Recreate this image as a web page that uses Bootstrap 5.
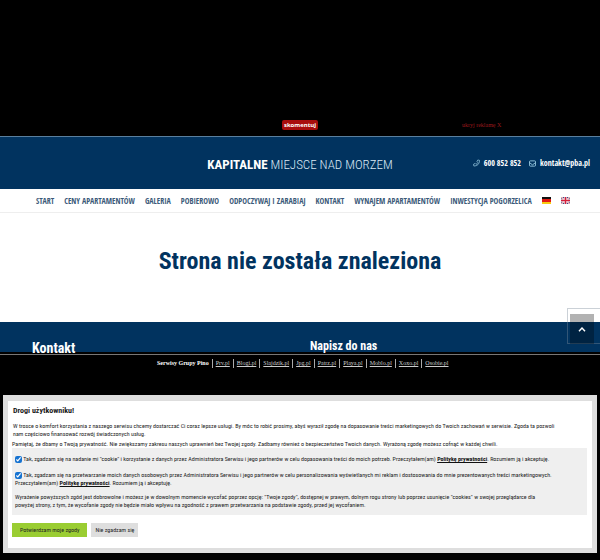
<!DOCTYPE html>
<html lang="pl">
<head>
<meta charset="utf-8">
<meta name="viewport" content="width=device-width, initial-scale=1">
<title>Strona nie została znaleziona</title>
<link href="https://cdn.jsdelivr.net/npm/bootstrap@5.3.0/dist/css/bootstrap.min.css" rel="stylesheet">
<style>
:root { --navy: #01335f; --narrow: "Roboto Condensed", Roboto, sans-serif; --narrow-open: "Open Sans Condensed", "Open Sans", sans-serif; }
body { background: #000; }
.ad-bar { height: 137px; border-bottom: 1px solid #5a7f9e; padding-bottom: 6px; }
.comment-btn { background: #a80d0d; color: #fff; border: 0; border-radius: 2px; font: bold 6px/10px "Open Sans", sans-serif; padding: 0 2px; }
.hide-ad { color: #9c181c; font: 6px/10px "Liberation Serif", serif; padding-left: 12px; }
.site-head { background: var(--navy); color: #fff; height: 52px; }
.brand-link { color: #dbe9f5; font: 300 13px/16px var(--narrow); }
.brand-link b { font-weight: 700; }
.site-contact { padding-right: 10px; }
.contact-link { color: #fff; font: bold 8px/10px var(--narrow-open); }
.main-menu { height: 24px; border-bottom: 1px solid #eee; gap: 10px; padding-left: 36px; font: 300 8px/10px var(--narrow-open); }
.main-menu a { color: #3b5a79; }
.page-title { color: var(--navy); font: bold 24px/30px var(--narrow); height: 109px; padding-top: 33px; }
.foot { background: var(--navy); color: #fff; height: 30px; padding: 17px 32px 0; }
.foot h2 { font: bold 14px/18px var(--narrow); }
.foot h2.form-title { font-size: 12px; line-height: 15px; padding-left: 10px; }
.up-box { right: 0; top: -14px; width: 33px; height: 36px; padding: 5px 6px 1px 2px; border: 1px solid #7c8c9a66; border-right: 0; }
.up-btn { background: #0000004d; width: 24px; height: 30px; border: 0; }
.services { border-top: 1px solid #777; margin-top: 2px; padding: 4px 0 0 157px; font: 6px/9px "Liberation Serif", serif; height: 41px; }
.services a { color: #ccc; border-left: 1px solid #aaa; padding-left: 3px; margin-left: 3px; }
.consent { background: #fff; border: 5px solid #dedede; border-top-width: 6px; margin: 0 3px 7px; padding: 5px 5px 11px 4px; font: 6px/8px var(--narrow); color: #222; }
.consent h1 { font: bold 8px/10px var(--narrow); margin-bottom: 6px; padding-left: 1px; }
.consent .lead-in { margin-bottom: 2px; padding-left: 1px; }
.consent a { color: #111; font-weight: bold; }
.consent-box { background: #efefef; padding: 7px 3px 6px; }
.consent-box p { margin-bottom: 8px; }
.consent-box p.terms { margin-bottom: 6px; }
.consent input { width: 7px; height: 7px; margin: 0; vertical-align: bottom; accent-color: #1673d1; }
.consent button { border: 0; background: #dedede; color: #222; height: 14px; padding: 0 4px; }
.consent button.agree { background: #9acd32; padding: 0 8px; }
</style>
<script src="https://cdn.jsdelivr.net/npm/bootstrap@5.3.0/dist/js/bootstrap.bundle.min.js"></script>
</head>
<body class="overflow-hidden">
<div class="ad-bar row g-0 align-items-end">
  <div class="col-6 offset-3 d-flex justify-content-center"><button type="button" class="comment-btn">skomentuj</button></div>
  <div class="col-3 d-flex"><a href="#" class="hide-ad text-decoration-none">ukryj reklamę X</a></div>
</div>
<header class="site-head row g-0 align-items-center text-nowrap">
  <div class="col-6 offset-3 text-center"><a href="#" class="brand-link text-decoration-none"><b class="text-white">KAPITALNE</b> MIEJSCE NAD MORZEM</a></div>
  <div class="site-contact col-3 d-flex justify-content-end gap-2">
    <a href="#" class="contact-link d-flex align-items-center gap-1 text-decoration-none"><svg width="7" height="8" viewBox="0 0 16 16" fill="none" stroke="#9fd0e6" stroke-width="1.6"><path d="M11 1l4 1c0 8-5 13-13 13l-1-4 4-2 2 2c2-1 3-2 4-4L9 5z"/></svg>600 852 852</a>
    <a href="#" class="contact-link d-flex align-items-center gap-1 text-decoration-none"><svg width="7" height="7" viewBox="0 0 16 14" fill="none" stroke="#9fd0e6" stroke-width="2"><rect x="1" y="1" width="14" height="12" rx="2"/><path d="M1 5l7 5 7-5"/></svg>kontakt@pba.pl</a>
  </div>
</header>
<nav class="main-menu bg-white d-flex align-items-center text-nowrap">
  <a href="#" class="text-decoration-none">START</a><a href="#" class="text-decoration-none">CENY APARTAMENTÓW</a><a href="#" class="text-decoration-none">GALERIA</a><a href="#" class="text-decoration-none">POBIEROWO</a><a href="#" class="text-decoration-none">ODPOCZYWAJ I ZARABIAJ</a><a href="#" class="text-decoration-none">KONTAKT</a><a href="#" class="text-decoration-none">WYNAJEM APARTAMENTÓW</a><a href="#" class="text-decoration-none">INWESTYCJA POGORZELICA</a>
  <a href="#" class="d-flex" aria-label="Deutsch"><svg width="9" height="7"><path d="M0 0h9v3H0z" fill="#111"/><path d="M0 2h9v3H0z" fill="#e21a12"/><path d="M0 5h9v2H0z" fill="#f8cb12"/></svg></a>
  <a href="#" class="d-flex" aria-label="English"><svg width="9" height="7" viewBox="0 0 18 14"><path d="M0 0h18v14H0z" fill="#263a7d"/><path d="M0 0l18 14M18 0L0 14" stroke="#fff" stroke-width="3"/><path d="M0 0l18 14M18 0L0 14" stroke="#d33" stroke-width="1"/><path d="M9 0v14M0 7h18" stroke="#fff" stroke-width="5"/><path d="M9 0v14M0 7h18" stroke="#d5213c" stroke-width="3"/></svg></a>
</nav>
<main><h1 class="page-title bg-white text-center mb-0">Strona nie została znaleziona</h1></main>
<footer class="foot position-relative">
  <div class="row g-0">
    <div class="col-6"><h2 class="mb-0">Kontakt</h2></div>
    <div class="col-6"><h2 class="form-title mb-0">Napisz do nas</h2></div>
  </div>
  <div class="up-box position-absolute"><button type="button" class="up-btn d-flex align-items-center justify-content-center p-0" aria-label="Do góry"><svg width="8" height="5" viewBox="0 0 8 5" fill="none" stroke="#fff" stroke-width="1.4"><path d="M1 4.300L4 1l3 3.300"/></svg></button></div>
</footer>
<nav class="services d-flex align-items-start text-nowrap">
  <b class="text-white">Serwisy Grupy Pino</b><a href="#">Prv.pl</a><a href="#">Blogi.pl</a><a href="#">Slajdzik.pl</a><a href="#">Jpg.pl</a><a href="#">Patrz.pl</a><a href="#">Playa.pl</a><a href="#">Moblo.pl</a><a href="#">Xoxo.pl</a><a href="#">Osobie.pl</a>
</nav>
<section class="consent text-nowrap">
  <h1>Drogi użytkowniku!</h1>
  <p class="lead-in">W trosce o komfort korzystania z naszego serwisu chcemy dostarczać Ci coraz lepsze usługi. By móc to robić prosimy, abyś wyraził zgodę na dopasowanie treści marketingowych do Twoich zachowań w serwisie. Zgoda ta pozwoli<br>nam częściowo finansować rozwój świadczonych usług.</p>
  <p class="mb-0">Pamiętaj, że dbamy o Twoją prywatność. Nie zwiększamy zakresu naszych uprawnień bez Twojej zgody. Zadbamy również o bezpieczeństwo Twoich danych. Wyrażoną zgodę możesz cofnąć w każdej chwili.</p>
  <div class="consent-box">
    <p><input type="checkbox" id="c1" checked> <label class="d-inline" for="c1">Tak, zgadzam się na nadanie mi "cookie" i korzystanie z danych przez Administratora Serwisu i jego partnerów w celu dopasowania treści do moich potrzeb. Przeczytałem(am) <a href="#">Politykę prywatności</a>. Rozumiem ją i akceptuję.</label></p>
    <p class="terms"><input type="checkbox" id="c2" checked> <label class="d-inline" for="c2">Tak, zgadzam się na przetwarzanie moich danych osobowych przez Administratora Serwisu i jego partnerów w celu personalizowania wyświetlanych mi reklam i dostosowania do mnie prezentowanych treści marketingowych.<br>Przeczytałem(am) <a href="#">Politykę prywatności</a>. Rozumiem ją i akceptuję.</label></p>
    <p class="mb-0">Wyrażenie powyższych zgód jest dobrowolne i możesz je w dowolnym momencie wycofać poprzez opcję: "Twoje zgody", dostępnej w prawym, dolnym rogu strony lub poprzez usunięcie "cookies" w swojej przeglądarce dla<br>powyżej strony, z tym, że wycofanie zgody nie będzie miało wpływu na zgodność z prawem przetwarzania na podstawie zgody, przed jej wycofaniem.</p>
  </div>
  <div class="d-flex gap-1 mt-2"><button type="button" class="agree">Potwierdzam moje zgody</button><button type="button">Nie zgadzam się</button></div>
</section>
</body>
</html>
